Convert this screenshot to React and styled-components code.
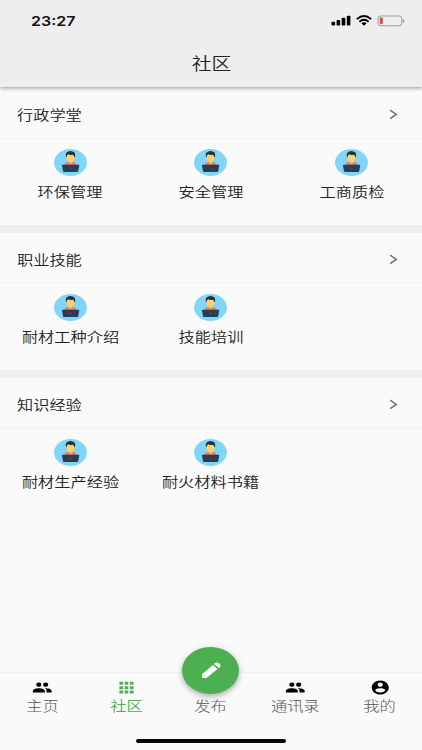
import React from "react";
import styled, { createGlobalStyle } from "styled-components";

const GlobalStyle = createGlobalStyle`
  * { box-sizing: border-box; }
  body { margin: 0; background: #fafafa; font-family: "Noto Sans CJK SC", sans-serif; }
`;

const Screen = styled.div`
  width: 422px;
  height: 750px;
  overflow: hidden;
  display: flex;
  flex-direction: column;
  background: #fafafa;
`;

const Header = styled.header`
  height: 87px;
  flex: none;
  background: #eee;
  box-shadow: 0 1px 4px rgba(0, 0, 0, 0.42);
  z-index: 1;
`;

const StatusBar = styled.div`
  height: 41px;
  padding: 0 17px 0 30.5px;
  display: flex;
  align-items: center;
  justify-content: space-between;
`;

const Clock = styled.span`
  font: 600 13.6px/20px Inter, sans-serif;
  color: #111;
  transform: scaleX(1.18);
  transform-origin: left;
`;

const StatusIcons = styled.div`
  display: flex;
  align-items: center;
  gap: 5px;
`;

const Wide = styled.span`
  display: inline-block;
  white-space: nowrap;
  font-size: ${(p) => p.$size || 13.5}px;
  line-height: 20px;
  font-weight: ${(p) => p.$weight || 350};
  color: ${(p) => p.$color || "#222"};
  transform: scaleX(1.2);
  transform-origin: ${(p) => p.$origin || "center"};
`;

const TitleBar = styled.div`
  height: 44px;
  display: flex;
  align-items: center;
  justify-content: center;
`;

const Content = styled.main`
  flex: 1;
  padding-top: 1.8px;
`;

const Section = styled.section`
  height: 144.7px;
  border-bottom: ${(p) => (p.$last ? "0" : "8.4px solid #eee")};
`;

const SectionHead = styled.div`
  height: 50px;
  padding: 2px 24px 0 17px;
  display: flex;
  align-items: center;
  justify-content: space-between;
  border-bottom: 1px solid #f4f4f4;
`;

const ItemGrid = styled.div`
  display: grid;
  grid-template-columns: repeat(3, 1fr);
  padding-top: 10.4px;
`;

const Item = styled.div`
  display: flex;
  flex-direction: column;
  align-items: center;
  gap: 5px;
`;

const TabBar = styled.nav`
  flex: none;
  height: 67px;
  display: grid;
  grid-template-columns: repeat(5, 1fr);
  border-top: 1px solid #f0f0f5;
  padding-top: 6px;
`;

const Tab = styled.div`
  position: relative;
  display: flex;
  flex-direction: column;
  align-items: center;
  color: ${(p) => (p.$active ? "#4caf50" : "#000")};
`;

const IconSlot = styled.div`
  height: 17px;
  margin-bottom: -1px;
  display: flex;
  align-items: center;
`;

const PublishButton = styled.div`
  position: absolute;
  top: -32px;
  width: 57px;
  height: 47px;
  border-radius: 50%;
  background: #4caf50;
  display: flex;
  align-items: center;
  justify-content: center;
  box-shadow: 0 3px 5px rgba(0, 0, 0, 0.2), 0 1px 8px rgba(0, 0, 0, 0.12);
`;

const HomeArea = styled.div`
  flex: none;
  height: 11px;
  display: flex;
  justify-content: center;
`;

const HomeIndicator = styled.div`
  width: 150px;
  height: 4px;
  border-radius: 2px;
  background: #050508;
`;

const Signal = () => (
  <svg width="20" height="11" viewBox="0 0 20 11">
    <rect x="0.5" y="6.8" width="3.6" height="3.7" rx=".8" />
    <rect x="5.6" y="5" width="3.6" height="5.5" rx=".8" />
    <rect x="10.7" y="2.8" width="3.6" height="7.7" rx=".8" />
    <rect x="15.8" y="0.7" width="3.6" height="9.8" rx=".8" />
  </svg>
);

const Wifi = () => (
  <svg width="16" height="11" viewBox="0 0 16 11" fill="none" stroke="#000" strokeWidth="1.8">
    <path d="M.8 4.1Q8-2 15.2 4.1" />
    <path d="M3.4 6.7Q8 2.8 12.6 6.7" />
    <path d="M5.4 8.2Q8 6.2 10.6 8.2L8 10.7Z" fill="#000" stroke="none" />
  </svg>
);

const Battery = () => (
  <svg width="28" height="12" viewBox="0 0 28 12">
    <rect x="1" y="1" width="23.8" height="9.8" rx="2.6" fill="none" stroke="#999" />
    <rect x="2.8" y="2.5" width="3" height="6.8" rx="1" fill="#e8483c" />
    <path d="M26 4.2Q27.4 4.7 27.4 6T26 7.8Z" fill="#888" />
  </svg>
);

const Chevron = () => (
  <svg width="9" height="10" viewBox="0 0 9 10" fill="none" stroke="#757575" strokeWidth="1.6">
    <path d="M1.2 1.2L7.2 5.4L1.2 9.6" />
  </svg>
);

const Learner = () => (
  <svg width="33" height="27" viewBox="0 0 33 27">
    <ellipse cx="16.5" cy="13.5" rx="16.4" ry="13.4" fill="#80d6f8" />
    <path d="M10.4 17V15.6Q11 13.4 14.2 13L16.5 14.2L18.9 13Q22.1 13.4 22.7 15.6V17Z" fill="#ee7668" />
    <path d="M14.6 10.5H18.5V13.3L16.5 15.5L14.6 13.3Z" fill="#f3bd57" />
    <path d="M12.4 5.4H20.7V8.4Q20 12.6 16.5 12.9Q13 12.6 12.4 8.4Z" fill="#ffd269" />
    <path d="M11.9 7.4Q11.2 3.9 13.5 3Q15.7 1.4 18.6 2.4Q21.6 3 21.1 7.5L20.4 8.4Q20.3 6.3 18.8 5.8Q15.6 6.1 14.2 5.3Q12.8 5.7 12.5 8.4Z" fill="#292f38" />
    <path d="M8.7 15.8H24.5Q25.3 15.8 25.2 16.6L24.2 22.3Q24 23.1 23 23.1H10.2Q9.2 23.1 9 22.3L8 16.6Q7.9 15.8 8.7 15.8Z" fill="#2c3c51" />
    <ellipse cx="16.6" cy="19.2" rx=".8" ry=".6" fill="#53667c" />
  </svg>
);

const GLYPHS = {
  people: "M16 11c1.66 0 2.99-1.34 2.99-3S17.66 5 16 5s-3 1.34-3 3 1.34 3 3 3zm-8 0c1.66 0 2.99-1.34 2.99-3S9.66 5 8 5 5 6.34 5 8s1.34 3 3 3zm0 2c-2.33 0-7 1.17-7 3.5V19h14v-2.5C15 14.17 10.33 13 8 13zm8 0c-.29 0-.62.02-.97.05 1.16.84 1.97 1.97 1.97 3.45V19h6v-2.5c0-2.33-4.67-3.5-7-3.5z",
  grid: "M4 4h4.3v4.2H4zm6.1 0h4.3v4.2h-4.3zm6.1 0h4.3v4.2h-4.3zM4 10.1h4.3v4.2H4zm6.1 0h4.3v4.2h-4.3zm6.1 0h4.3v4.2h-4.3zM4 16.2h4.3v4.2H4zm6.1 0h4.3v4.2h-4.3zm6.1 0h4.3v4.2h-4.3z",
  account: "M12 2C6.48 2 2 6.48 2 12s4.48 10 10 10 10-4.48 10-10S17.52 2 12 2zm0 3c1.66 0 3 1.34 3 3s-1.34 3-3 3-3-1.34-3-3 1.34-3 3-3zm0 14.2c-2.5 0-4.71-1.28-6-3.22.03-1.99 4-3.08 6-3.08 1.99 0 5.97 1.09 6 3.08-1.29 1.94-3.5 3.22-6 3.22z",
  pencil: "M3 16.7V21h4.3L18.1 10.4l-4.5-4.5zM20.4 8.4c.9-.9 1-2.3.1-3.3l-1.6-1.6c-1-.9-2.4-.8-3.3.1l-1 1.1 4.7 4.7z",
};

const Glyph = ({ name, width = 20.5, height = 17 }) => (
  <svg width={width} height={height} viewBox="0 0 24 24" preserveAspectRatio="none" fill="currentColor">
    <path d={GLYPHS[name]} />
  </svg>
);

const PencilWrap = styled.span`
  display: flex;
  color: #fff;
`;

const sections = [
  { title: "行政学堂", items: ["环保管理", "安全管理", "工商质检"] },
  { title: "职业技能", items: ["耐材工种介绍", "技能培训"] },
  { title: "知识经验", items: ["耐材生产经验", "耐火材料书籍"] },
];

const tabs = [
  { label: "主页", icon: "people" },
  { label: "社区", icon: "grid", active: true },
  { label: "发布", publish: true },
  { label: "通讯录", icon: "people" },
  { label: "我的", icon: "account" },
];

export default function App() {
  return (
    <Screen>
      <GlobalStyle />
      <Header>
        <StatusBar>
          <Clock>23:27</Clock>
          <StatusIcons>
            <Signal />
            <Wifi />
            <Battery />
          </StatusIcons>
        </StatusBar>
        <TitleBar>
          <Wide $size={16.5}>社区</Wide>
        </TitleBar>
      </Header>
      <Content>
        {sections.map((s, i) => (
          <Section key={s.title} $last={i === sections.length - 1}>
            <SectionHead>
              <Wide $origin="left">{s.title}</Wide>
              <Chevron />
            </SectionHead>
            <ItemGrid>
              {s.items.map((label) => (
                <Item key={label}>
                  <Learner />
                  <Wide>{label}</Wide>
                </Item>
              ))}
            </ItemGrid>
          </Section>
        ))}
      </Content>
      <TabBar>
        {tabs.map((t) => (
          <Tab key={t.label} $active={t.active}>
            <IconSlot>{t.icon && <Glyph name={t.icon} />}</IconSlot>
            {t.publish && (
              <PublishButton>
                <PencilWrap>
                  <Glyph name="pencil" width={24.5} height={20.5} />
                </PencilWrap>
              </PublishButton>
            )}
            <Wide $weight={t.active ? 350 : 300} $color={t.active ? "#4caf50" : "#555"}>{t.label}</Wide>
          </Tab>
        ))}
      </TabBar>
      <HomeArea>
        <HomeIndicator />
      </HomeArea>
    </Screen>
  );
}
